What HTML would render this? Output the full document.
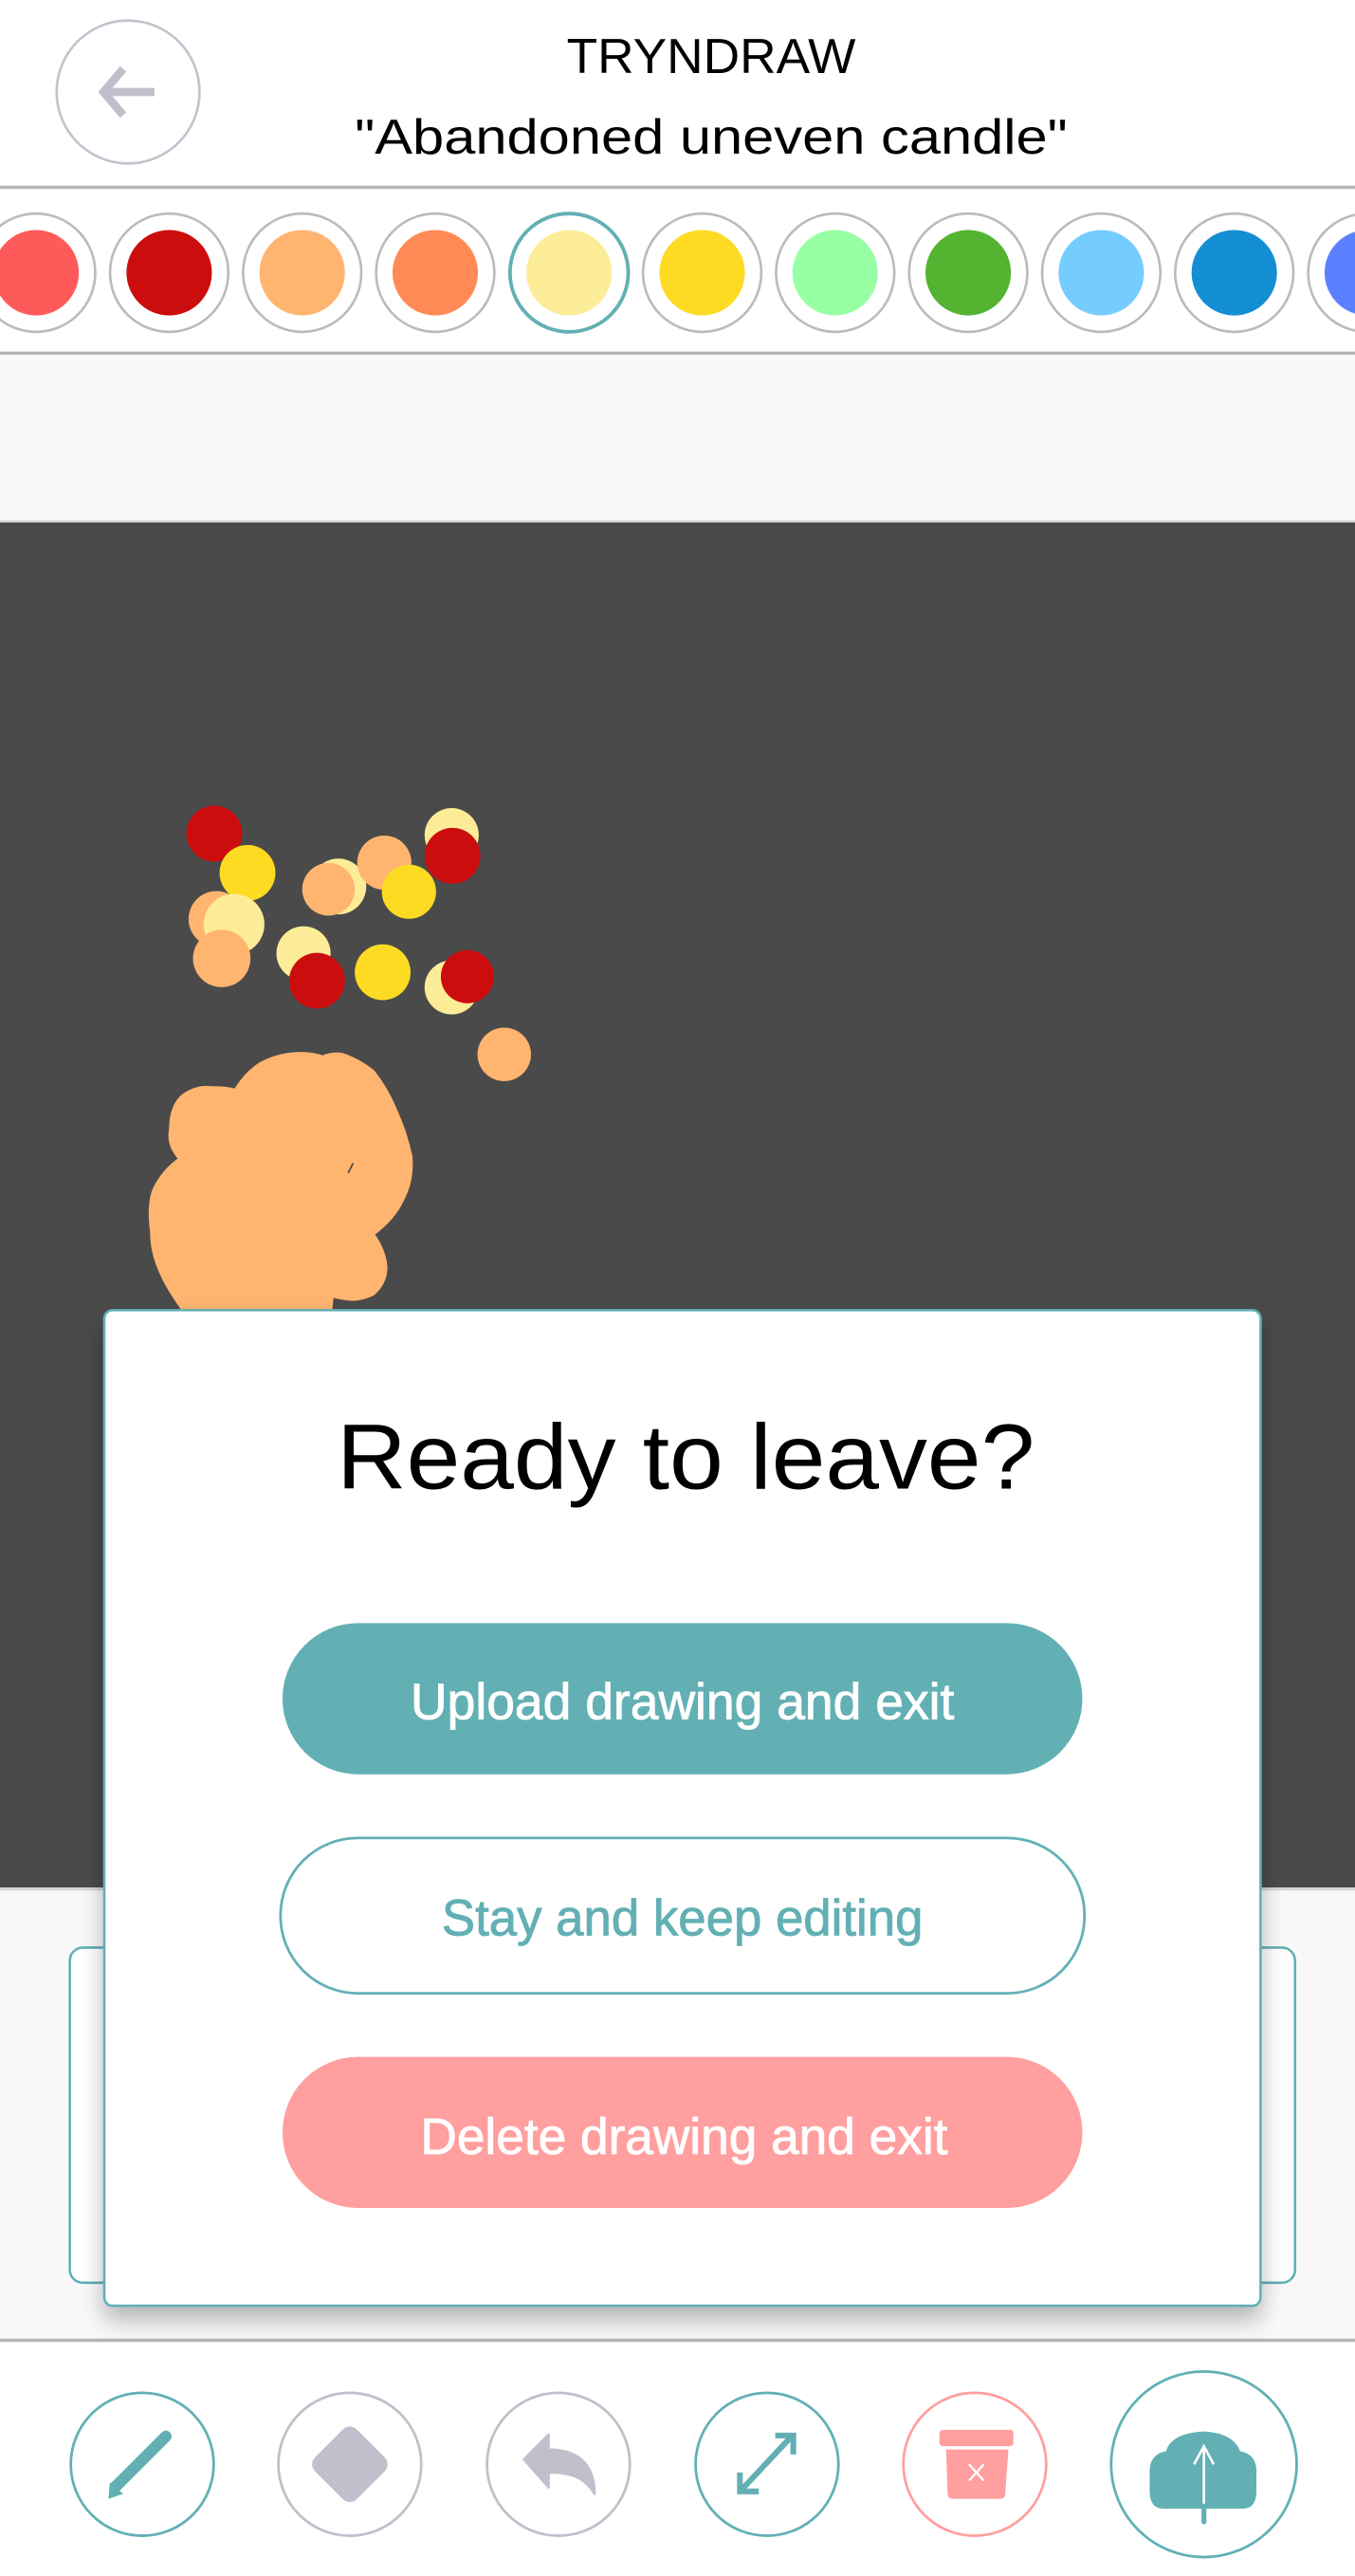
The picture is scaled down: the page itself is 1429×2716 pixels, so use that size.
<!DOCTYPE html>
<html><head><meta charset="utf-8"><style>html,body{margin:0;padding:0;background:#fff}svg{display:block}</style></head>
<body>
<svg width="1429" height="2716" viewBox="0 0 825 1568" preserveAspectRatio="none" xmlns="http://www.w3.org/2000/svg" font-family="Liberation Sans, sans-serif">
<defs>
<filter id="sh" x="-20%" y="-20%" width="140%" height="150%"><feDropShadow dx="0" dy="8" stdDeviation="7" flood-color="#000" flood-opacity="0.28"/></filter>
</defs>
<rect width="825" height="1568" fill="#fff"/>
<!-- header -->
<circle cx="78" cy="56" r="43.5" fill="#fff" stroke="#c2c2cf" stroke-width="1.5"/>
<path d="M63 56 H94" stroke="#c0c0cc" stroke-width="5"/>
<path d="M75 42 L63 56 L75 70" fill="none" stroke="#c0c0cc" stroke-width="5" stroke-linejoin="miter"/>
<text x="345" y="44.5" font-size="30" textLength="176" lengthAdjust="spacingAndGlyphs" fill="#000">TRYNDRAW</text>
<text x="216" y="93.5" font-size="30" textLength="434" lengthAdjust="spacingAndGlyphs" fill="#000">"Abandoned uneven candle"</text>
<rect x="0" y="113" width="825" height="2" fill="#b5b5b5"/>
<!-- palette -->
<g stroke="#bbbbbb" stroke-width="1.5" fill="#fff">
<circle cx="22" cy="166" r="36"/><circle cx="103" cy="166" r="36"/><circle cx="184" cy="166" r="36"/><circle cx="265" cy="166" r="36"/>
<circle cx="346.5" cy="166" r="36" stroke="#62b0b4" stroke-width="2.2"/>
<circle cx="427.5" cy="166" r="36"/><circle cx="508.5" cy="166" r="36"/><circle cx="589.5" cy="166" r="36"/><circle cx="670.5" cy="166" r="36"/><circle cx="751.5" cy="166" r="36"/><circle cx="832.5" cy="166" r="36"/>
</g>
<circle cx="22" cy="166" r="26" fill="#ff5a5a"/>
<circle cx="103" cy="166" r="26" fill="#cc0d0d"/>
<circle cx="184" cy="166" r="26" fill="#ffb570"/>
<circle cx="265" cy="166" r="26" fill="#ff8a55"/>
<circle cx="346.5" cy="166" r="26" fill="#fdec97"/>
<circle cx="427.5" cy="166" r="26" fill="#fedb23"/>
<circle cx="508.5" cy="166" r="26" fill="#99ffa5"/>
<circle cx="589.5" cy="166" r="26" fill="#54b432"/>
<circle cx="670.5" cy="166" r="26" fill="#75ccff"/>
<circle cx="751.5" cy="166" r="26" fill="#148ed3"/>
<circle cx="832.5" cy="166" r="26" fill="#5a80ff"/>
<rect x="0" y="214" width="825" height="2" fill="#b5b5b5"/>
<rect x="0" y="216" width="825" height="101" fill="#f9f9f9"/>
<rect x="0" y="316.5" width="825" height="1.5" fill="#dcdcdc"/>
<!-- canvas -->
<rect x="0" y="318" width="825" height="831" fill="#4a4a4a"/>
<g>
<circle cx="130.5" cy="507.4" r="17" fill="#cc0d0d"/>
<circle cx="150.7" cy="531.3" r="17" fill="#fedb23"/>
<circle cx="131.8" cy="559.4" r="17" fill="#ffb570"/>
<circle cx="142.5" cy="562.6" r="18.5" fill="#fdec97"/>
<circle cx="135" cy="583.4" r="17.5" fill="#ffb570"/>
<circle cx="206" cy="539.6" r="17" fill="#fdec97"/>
<circle cx="200" cy="541.3" r="16" fill="#ffb570"/>
<circle cx="234" cy="525.1" r="16.5" fill="#ffb570"/>
<circle cx="249" cy="542.8" r="16.5" fill="#fedb23"/>
<circle cx="275" cy="508.4" r="16.5" fill="#fdec97"/>
<circle cx="275.5" cy="520.9" r="17" fill="#cc0d0d"/>
<circle cx="184.8" cy="580.3" r="16.5" fill="#fdec97"/>
<circle cx="193" cy="597" r="17" fill="#cc0d0d"/>
<circle cx="233" cy="591.8" r="17" fill="#fedb23"/>
<circle cx="275" cy="601" r="16.5" fill="#fdec97"/>
<circle cx="284.6" cy="594.5" r="16.2" fill="#cc0d0d"/>
<circle cx="307" cy="641.8" r="16.3" fill="#ffb570"/>
<path d="M112.6 800 L110 795 Q92 770 92.4 750.2 Q90 732 94.3 723.1 Q100 712 109.7 705.4 Q102 697 103.9 687.6 Q104 673 111.6 666.8 Q120 661 128.9 662.2 Q137 662 143.4 663.7 Q149 654 157.8 648 Q168 642 180.9 641.4 Q190 641 196.3 643.5 Q202 641 207.9 641.8 Q218 645 227.1 652.2 Q235 662 240.6 675.2 Q247 689 250.2 704.3 Q251 718 246.4 727.3 Q241 741 227 751.2 Q234 761 234.9 771 Q235 781 227 787.7 Q220 791 213.7 790.8 Q206 790 202.2 788.7 L201 800 Z" fill="#ffb570" stroke="#ffb570" stroke-width="2" stroke-linejoin="round"/>
<path d="M215 708 L212 714" stroke="#4a4a4a" stroke-width="1"/>
</g>
<!-- bottom area -->
<rect x="0" y="1149" width="825" height="275" fill="#f9f9f9"/>
<rect x="0" y="1149" width="825" height="1.8" fill="#d6d6d6"/>
<rect x="42.5" y="1185.5" width="746" height="204" rx="8" fill="#fff" stroke="#62b0b4" stroke-width="1.5"/>
<rect x="0" y="1423.5" width="825" height="2" fill="#b5b5b5"/>
<!-- modal -->
<rect x="63.5" y="797.5" width="704" height="606" rx="5" fill="#fff" stroke="#62b0b4" stroke-width="1.5" filter="url(#sh)"/>
<text x="205" y="906" font-size="56" textLength="425" lengthAdjust="spacingAndGlyphs" fill="#000">Ready to leave?</text>
<rect x="172" y="988" width="487" height="92" rx="46" fill="#62b0b4"/>
<text x="250" y="1046.5" font-size="31" textLength="331" lengthAdjust="spacingAndGlyphs" fill="#fff" stroke="#fff" stroke-width="0.5">Upload drawing and exit</text>
<rect x="170.8" y="1118.8" width="489.5" height="94.5" rx="47" fill="#fff" stroke="#62b0b4" stroke-width="1.6"/>
<text x="269" y="1178" font-size="31" textLength="293" lengthAdjust="spacingAndGlyphs" fill="#62b0b4" stroke="#62b0b4" stroke-width="0.5">Stay and keep editing</text>
<rect x="172" y="1252" width="487" height="92" rx="46" fill="#ff9f9f"/>
<text x="256" y="1311" font-size="31" textLength="321" lengthAdjust="spacingAndGlyphs" fill="#fff" stroke="#fff" stroke-width="0.5">Delete drawing and exit</text>
<!-- toolbar -->
<circle cx="86.6" cy="1500" r="43.5" fill="#fff" stroke="#62b0b4" stroke-width="1.6"/>
<path d="M101 1483 L70 1514" stroke="#62b0b4" stroke-width="7" stroke-linecap="round"/>
<path d="M66 1521 L67 1511 L75 1518 Z" fill="#62b0b4"/>
<circle cx="213" cy="1500" r="43.5" fill="#fff" stroke="#c0c0cc" stroke-width="1.6"/>
<rect x="195" y="1482" width="36" height="36" rx="6" fill="#c0c0cc" transform="rotate(45 213 1500)"/>
<circle cx="340" cy="1500" r="43.5" fill="#fff" stroke="#c0c0cc" stroke-width="1.6"/>
<path d="M319 1497 L334 1482 L334 1491 C352 1491 362 1500 362 1518 C356 1508 348 1505 334 1505 L334 1514 Z" fill="#c0c0cc" stroke="#c0c0cc" stroke-width="1.5" stroke-linejoin="round"/>
<circle cx="467" cy="1500" r="43.5" fill="#fff" stroke="#62b0b4" stroke-width="1.6"/>
<path d="M452 1515 L481 1484" stroke="#62b0b4" stroke-width="3.5"/>
<path d="M472 1482.5 H483 V1494" fill="none" stroke="#62b0b4" stroke-width="3.5"/>
<path d="M450.5 1505 V1516.5 H462" fill="none" stroke="#62b0b4" stroke-width="3.5"/>
<circle cx="593.5" cy="1500" r="43.5" fill="#fff" stroke="#ff9f9f" stroke-width="1.6"/>
<rect x="572" y="1479" width="45" height="10" rx="2" fill="#ff9f9f"/>
<path d="M576 1491 H614 L612 1518 Q612 1521 609 1521 H580 Q577 1521 577 1518 Z" fill="#ff9f9f"/>
<path d="M590 1500 L599 1510 M599 1500 L590 1510" stroke="#fff" stroke-width="1.3"/>
<circle cx="733" cy="1500" r="56.5" fill="#fff" stroke="#62b0b4" stroke-width="1.6"/>
<path d="M708 1527 Q700 1527 700 1516 L700 1504 Q700 1494 710 1492 Q713 1481 733 1480 Q751 1481 755 1492 Q765 1494 765 1504 L765 1516 Q765 1527 757 1527 Z" fill="#62b0b4"/>
<path d="M733 1525 V1535" stroke="#62b0b4" stroke-width="3" stroke-linecap="round"/>
<path d="M733 1524 V1490 M727 1500 L733 1489 L739 1500" fill="none" stroke="#fff" stroke-width="1.5"/>
</svg>
</body></html>
